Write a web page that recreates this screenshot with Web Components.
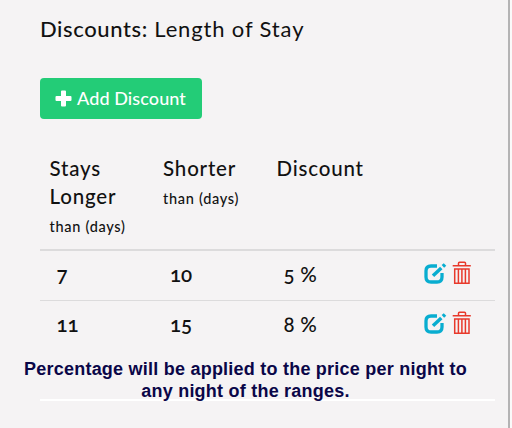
<!DOCTYPE html>
<html lang="en">
<head>
<meta charset="utf-8">
<title>Discounts</title>
<style>
    body {
        margin: 0;
        background: #fafafa;
        font-family: Lato, "Open Sans", sans-serif;
        color: #111;
    }
</style>
</head>
<body>
<discount-panel>
    <panel-title slot="title" label="Discounts:">Length of Stay</panel-title>
    <add-button slot="action">Add Discount</add-button>
    <discount-head></discount-head>
    <discount-row longer="7" shorter="10" discount="5 %"></discount-row>
    <discount-row longer="11" shorter="15" discount="8 %"></discount-row>
    <panel-note slot="note">Percentage will be applied to the price per night to<br>any night of the ranges.</panel-note>
</discount-panel>

<script>
class DiscountPanel extends HTMLElement {
    constructor() {
        super();
        this.attachShadow({ mode: 'open' });
        this.shadowRoot.innerHTML = `
            <style>
                :host {
                    display: flex;
                    flex-direction: column;
                    box-sizing: border-box;
                    width: 510px;
                    height: 428px;
                    padding: 16px 13px 0 40px;
                    border-right: 2px solid #b4b3b4;
                    background: #f5f3f4;
                    overflow: hidden;
                }
                .table {
                    margin-top: 30px;
                }
            </style>
            <slot name="title"></slot>
            <slot name="action"></slot>
            <div class="table"><slot></slot></div>
            <slot name="note"></slot>
        `;
    }
}

class PanelTitle extends HTMLElement {
    constructor() {
        super();
        this.attachShadow({ mode: 'open' });
        this.shadowRoot.innerHTML = `
            <style>
                :host {
                    display: block;
                    height: 28px;
                    line-height: 26px;
                    font-size: 22px;
                    letter-spacing: 0.85px;
                    white-space: nowrap;
                }
                b {
                    font-weight: 500;
                    letter-spacing: 0.6px;
                }
            </style>
            <b></b> <slot></slot>
        `;
    }

    connectedCallback() {
        this.shadowRoot.querySelector('b').textContent = this.getAttribute('label') || '';
    }
}

class AddButton extends HTMLElement {
    constructor() {
        super();
        this.attachShadow({ mode: 'open' });
        this.shadowRoot.innerHTML = `
            <style>
                :host {
                    display: block;
                    margin-top: 34px;
                }
                button {
                    display: flex;
                    align-items: center;
                    gap: 5px;
                    width: 162px;
                    height: 41px;
                    padding: 0 0 1px 15px;
                    border: 0;
                    border-radius: 4px;
                    background: #23cc77;
                    color: #fff;
                    font: 500 18px Lato, sans-serif;
                    letter-spacing: 0.1px;
                    white-space: nowrap;
                }
                svg {
                    flex: none;
                }
            </style>
            <button>
                <svg width="17" height="17" viewBox="0 0 17 17"><path d="M7 .5h3q1 0 1 1V6h4.500q1 0 1 1v3q0 1-1 1H11v4.500q0 1-1 1H7q-1 0-1-1V11H1.500q-1 0-1-1V7q0-1 1-1H6V1.500q0-1 1-1z" fill="#fff"/></svg>
                <slot></slot>
            </button>
        `;
    }
}

class DiscountHead extends HTMLElement {
    constructor() {
        super();
        this.attachShadow({ mode: 'open' });
        this.shadowRoot.innerHTML = `
            <style>
                :host {
                    display: grid;
                    grid-template-columns: 113.500px 113.500px 1fr;
                    box-sizing: border-box;
                    height: 102px;
                    padding: 5px 0 0 9.600px;
                    border-bottom: 2px solid #dcdbdc;
                    font-size: 20.500px;
                    font-weight: 500;
                    line-height: 28px;
                    letter-spacing: 0.8px;
                }
                small {
                    display: block;
                    font-size: 14.500px;
                    line-height: 33px;
                    letter-spacing: 0.7px;
                }
            </style>
            <div>Stays<br>Longer<small>than (days)</small></div>
            <div>Shorter<small>than (days)</small></div>
            <div>Discount</div>
        `;
    }
}

class DiscountRow extends HTMLElement {
    constructor() {
        super();
        this.attachShadow({ mode: 'open' });
        this.shadowRoot.innerHTML = `
            <style>
                :host {
                    display: grid;
                    grid-template-columns: 113.500px 113.500px 140.500px 28px 1fr;
                    align-items: center;
                    box-sizing: border-box;
                    height: 49px;
                    padding-left: 16.500px;
                    font-size: 20.500px;
                    font-weight: 600;
                    font-variant-numeric: oldstyle-nums;
                }
                :host(:nth-of-type(2)) {
                    border-top: 1px solid #dcdbdc;
                    height: 50px;
                }
                span {
                    margin-top: -3px;
                }
                .discount {
                    font-weight: 500;
                    letter-spacing: 0.2px;
                }
                svg {
                    display: block;
                    margin-top: -5px;
                }
            </style>
            <span class="longer"></span>
            <span class="shorter"></span>
            <span class="discount"></span>
            <svg width="23" height="24" viewBox="0 0 23 24" fill="none" stroke="#08add0">
                <path d="M13 5H7Q2 5 2 10v6q0 5 5 5h6q5 0 5-5v-4" stroke-width="3.300"/>
                <path d="M9 14.800 17.300 7" stroke-width="3.500"/>
                <path d="M18.900 5.400 21 3.500" stroke-width="3.700"/>
            </svg>
            <svg width="20" height="24" viewBox="0 0 20 24" fill="none" stroke="#e8392b" stroke-width="1.500">
                <path d="M6.500 4V2.200q0-1 1-1h5q1 0 1 1V4M.7 4.700h18.100M2.700 8h14.300v14.200H2.700zM6.400 8v14M9.900 8v14M13.400 8v14"/>
            </svg>
        `;
    }

    connectedCallback() {
        for (const name of ['longer', 'shorter', 'discount']) {
            this.shadowRoot.querySelector('.' + name).textContent = this.getAttribute(name) || '';
        }
    }
}

class PanelNote extends HTMLElement {
    constructor() {
        super();
        this.attachShadow({ mode: 'open' });
        this.shadowRoot.innerHTML = `
            <style>
                :host {
                    display: block;
                    position: relative;
                    box-sizing: border-box;
                    height: 51px;
                    padding-top: 8px;
                    color: #0a0648;
                    font: bold 18px/22px "Liberation Sans", sans-serif;
                    letter-spacing: 0.230px;
                    text-align: center;
                    white-space: nowrap;
                }
                .text {
                    position: relative;
                    margin: 0 -20px 0 -64px;
                }
                .rule {
                    position: absolute;
                    left: 0;
                    right: 0;
                    bottom: 0;
                    height: 2px;
                    background: #fff;
                }
            </style>
            <div class="rule"></div>
            <div class="text"><slot></slot></div>
        `;
    }
}

customElements.define('discount-panel', DiscountPanel);
customElements.define('panel-title', PanelTitle);
customElements.define('add-button', AddButton);
customElements.define('discount-head', DiscountHead);
customElements.define('discount-row', DiscountRow);
customElements.define('panel-note', PanelNote);
</script>
</body>
</html>
